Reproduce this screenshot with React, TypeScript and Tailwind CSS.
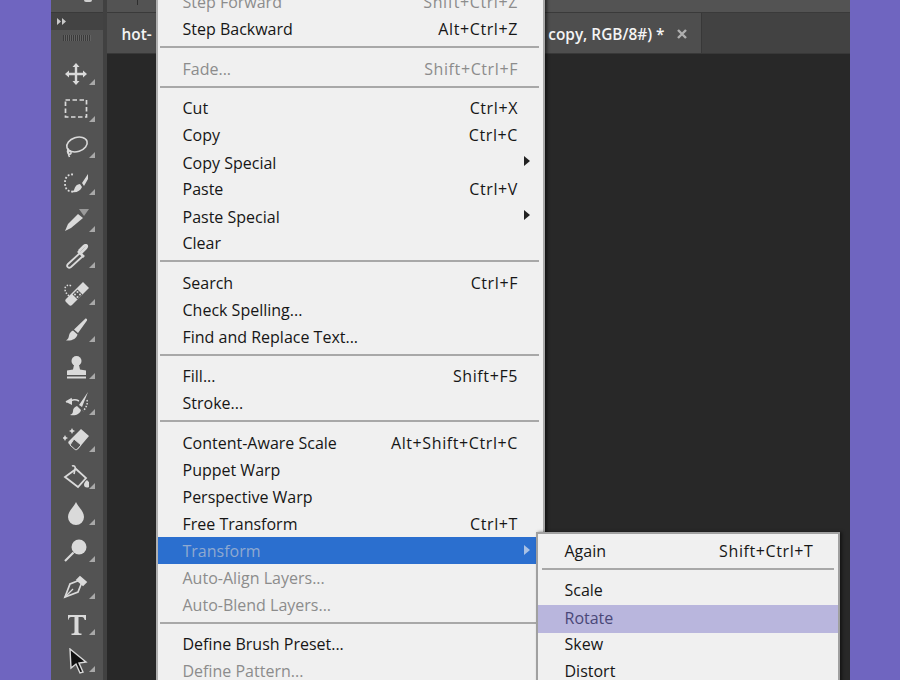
const font = { fontFamily: '"Open Sans", "Noto Sans", sans-serif' }

type Item = { label?: string; keys?: string; off?: boolean; arrow?: boolean; sep?: 'tall' | 'short' }

const mainItems: Item[] = [
  { label: 'Step Forward', keys: 'Shift+Ctrl+Z', off: true },
  { label: 'Step Backward', keys: 'Alt+Ctrl+Z' },
  { sep: 'tall' },
  { label: 'Fade...', keys: 'Shift+Ctrl+F', off: true },
  { sep: 'short' },
  { label: 'Cut', keys: 'Ctrl+X' },
  { label: 'Copy', keys: 'Ctrl+C' },
  { label: 'Copy Special', arrow: true },
  { label: 'Paste', keys: 'Ctrl+V' },
  { label: 'Paste Special', arrow: true },
  { label: 'Clear' },
  { sep: 'tall' },
  { label: 'Search', keys: 'Ctrl+F' },
  { label: 'Check Spelling...' },
  { label: 'Find and Replace Text...' },
  { sep: 'short' },
  { label: 'Fill...', keys: 'Shift+F5' },
  { label: 'Stroke...' },
  { sep: 'tall' },
  { label: 'Content-Aware Scale', keys: 'Alt+Shift+Ctrl+C' },
  { label: 'Puppet Warp' },
  { label: 'Perspective Warp' },
  { label: 'Free Transform', keys: 'Ctrl+T' },
]

const afterTransform: Item[] = [
  { label: 'Auto-Align Layers...', off: true },
  { label: 'Auto-Blend Layers...', off: true },
  { sep: 'short' },
  { label: 'Define Brush Preset...' },
  { label: 'Define Pattern...', off: true },
]

const Arrow = ({ color }: { color: string }) => (
  <svg width="6" height="10" viewBox="0 0 6 10" className="absolute right-[13px] top-[8px]">
    <path d="M0 0L6 5L0 10Z" fill={color} />
  </svg>
)

const MenuRow = ({ item }: { item: Item }) => {
  if (item.sep) {
    return (
      <div className={`${item.sep === 'tall' ? 'h-[13px]' : 'h-[12px]'} pt-[4px] pl-[2px] pr-[4px]`}>
        <div className="h-[2px] bg-[#a8a8a8]" />
      </div>
    )
  }
  return (
    <div className={`relative h-[27px] flex items-center justify-between pl-[25px] pr-[24.5px] ${item.arrow ? 'pt-[2px]' : ''} ${item.off ? 'text-[#8c8c8c]' : 'text-[#161616]'}`}>
      <span>{item.label}</span>
      {item.keys && <span className="tracking-[0.6px]">{item.keys}</span>}
      {item.arrow && <Arrow color="#222222" />}
    </div>
  )
}

const Corner = () => (
  <svg width="6" height="6" viewBox="0 0 6 6" className="absolute left-[38px] top-[22px]">
    <path d="M6 0V6H0Z" fill="#a9a9a9" />
  </svg>
)

// toolbar glyphs, drawn on a 26x26 box
const c = '#dadada'
const tools = [
  // move
  <g key="move" fill={c}>
    <path d="M13 2l3.500 4h-2.300v5.800H20v-2.300l4 3.500-4 3.500v-2.300h-5.800V20h2.300L13 24l-3.500-4h2.300v-5.800H6v2.300L2 13l4-3.500v2.300h5.800V6H9.500z" />
  </g>,
  // marquee
  <rect key="marq" x="2.500" y="3" width="21" height="17" fill="none" stroke={c} strokeWidth="1.700" strokeDasharray="4.500 2.500" />,
  // lasso
  <g key="lasso" fill="none" stroke={c} strokeWidth="1.600">
    <ellipse cx="14" cy="10.500" rx="10.500" ry="7" transform="rotate(-18 14 10.500)" />
    <path d="M6 15c-2 1-2 4 0 5s3-2 1-3-2 3-.5 6" />
  </g>,
  // quick selection
  <g key="quick">
    <path d="M10 3.500C5 3 2 6 2 12s3 9 8 8.500" fill="none" stroke={c} strokeWidth="1.800" strokeDasharray="1.800 1.800" />
    <path d="M25 3l-6 9 2 3 4-7zM17 13c-3 0-5 2-6 6 -1 1-1.500 1.500-2.500 2 5 1 9-1 10.500-5z" fill={c} />
  </g>,
  // 3d crop
  <g key="crop">
    <path d="M16 2h10l-5 7z" fill="#9a9a9a" />
    <path d="M15 7l5 4L8 21l-6 3 3-7z" fill={c} />
  </g>,
  // eyedropper
  <g key="drop" fill="none" stroke={c}>
    <path d="M17 9L5 20c-2 2 0 5 3 3L20 12" strokeWidth="1.800" />
    <path d="M15 7l6 6M18 9l5-5c2-2 0-4-2-2l-5 5" strokeWidth="2.600" />
  </g>,
  // healing
  <g key="heal">
    <path d="M8 5c-3-2-6 0-6 3s2 5 4 7" fill="none" stroke={c} strokeWidth="1.500" strokeDasharray="1.500 1.500" />
    <path d="M20 1l6 6L9 24c-1 1-2 1-3 0l-3-3c-1-1-1-2 0-3z" fill={c} />
    <path d="M14.500 8.500l5 5-5 5-5-5z" fill="#535353" />
    <g fill={c}>
      <circle cx="14.500" cy="11" r="1" /><circle cx="12" cy="13.500" r="1" /><circle cx="17" cy="13.500" r="1" /><circle cx="14.500" cy="16" r="1" />
    </g>
  </g>,
  // brush
  <g key="brush" fill={c}>
    <path d="M22 2c1-1 2.500 0 2 1.500L15 16l-4-3.500z" />
    <path d="M10 13.500l4.500 4c-1 4-5 6.500-11.500 6 2.500-1.500 2.500-3 3-5 .5-2.500 2-4 4-5z" />
  </g>,
  // stamp
  <g key="stamp" fill={c}>
    <circle cx="13.500" cy="7" r="5" />
    <path d="M11 11h5l1 4.500 6 1V21H4v-4.500l6-1z" />
    <rect x="4" y="22.500" width="19" height="2" />
  </g>,
  // history brush
  <g key="hist">
    <path d="M3 11l5-3v2c3-2 6-1 8 0" fill="none" stroke={c} strokeWidth="1.500" />
    <path d="M3 11l6-3v6z" fill={c} />
    <path d="M25 1l-9 13 3 2zM14 15c-3 1-4 3-4 5s-1 3-3 4c6 1 10-1 11-5z" fill={c} />
    <path d="M24 9c1 4-1 8-4 11" fill="none" stroke={c} strokeWidth="1.500" strokeDasharray="1.500 1.500" />
  </g>,
  // eraser
  <g key="eraser">
    <path d="M18 2l8 7-11 13c-1 1-2 1-3 0l-6-5c-1-1-1-2 0-3z" fill={c} />
    <path d="M11 12l7 6-3.500 4c-1 1-2 1-3 0l-4.500-4z" fill="#535353" stroke={c} />
    <g fill={c}>
      <path d="M9 1l1 2 2 1-2 1-1 2-1-2-2-1 2-1zM2 8l1 2 2 1-2 1-1 2-1-2-2-1 2-1z" />
    </g>
  </g>,
  // bucket
  <g key="bucket">
    <path d="M13 5l10 9-8 9L2 13z" fill="none" stroke={c} strokeWidth="1.800" />
    <path d="M9 2c2-1 4 1 3 3l-1 5" fill="none" stroke={c} strokeWidth="1.600" />
    <path d="M24 16c2 2 3 3 3 4.500a3 3 0 01-6 0c0-1.500 1-2.500 3-4.500z" fill={c} />
  </g>,
  // blur
  <path key="blur" d="M13 1c2 5 8 9 8 15a8 8 0 01-16 0C5 10 11 6 13 1z" fill={c} />,
  // dodge
  <g key="dodge">
    <circle cx="16" cy="10" r="7.500" fill={c} />
    <path d="M10.500 15.500L2 24" stroke={c} strokeWidth="2.200" />
  </g>,
  // pen
  <g key="pen" fill="none" stroke={c} strokeWidth="1.700">
    <path d="M17 6L7 10 2 23l13-5 4-10z" />
    <path d="M2 23l8-8" strokeWidth="1.200" />
    <path d="M17 3l6 5-3 3-6-5z" fill={c} />
  </g>,
  // type
  <path key="type" d="M5 4h18v5h-1.300c-.5-2-1.300-3-2.700-3h-3.500v15c0 1 1 1.500 3 1.500V24H8.500v-1.500c2 0 3-.5 3-1.500V6H8c-1.400 0-2.200 1-2.700 3H5z" fill={c} />,
  // path selection
  <path key="select" d="M7 1L8 20l5-4 4 9 3-1-4-9 7-1z" fill="#111111" stroke={c} strokeWidth="1.400" />,
]

const Toolbar = () => (
  <div className="w-[52px] shrink-0 bg-[#535353] flex flex-col">
    <div className="h-[13px] border-b border-[#3a3a3a]">
      <div className="ml-[33px] w-[8px] h-[2px] rounded-b-full bg-[#cfcfcf]" />
    </div>
    <div className="h-[17px] bg-[#434343] flex items-center pl-[6px]">
      <svg width="10" height="7" viewBox="0 0 10 7">
        <path d="M0 0L4 3.500L0 7ZM5 0L9 3.500L5 7Z" fill="#c9c9c9" />
      </svg>
    </div>
    <div className="mt-[5px] ml-[12px] w-[28px] h-[6px] bg-[repeating-linear-gradient(90deg,#3a3a3a_0,#3a3a3a_1px,#626262_1px,#626262_2px)]" />
    <div className="mt-[16px] flex flex-col gap-[3.7px]">
      {tools.map((glyph, i) => (
        <div key={i} className="relative h-[33px] flex items-center justify-center pr-[2px]">
          <svg width="26" height="26" viewBox="0 0 26 26">{glyph}</svg>
          <Corner />
        </div>
      ))}
    </div>
  </div>
)

const Submenu = () => (
  <div className="absolute left-[378px] top-[-5px] w-[304px] h-[200px] bg-[#f0f0f0] border-2 border-[#a0a0a0] border-b-0 shadow-[2px_0_3px_rgba(0,0,0,0.5)] text-[#161616]">
    <div className="h-[32px] pt-[2px] flex items-center justify-between pl-[27px] pr-[24px]">
      <span>Again</span>
      <span className="tracking-[0.6px]">Shift+Ctrl+T</span>
    </div>
    <div className="h-[11px] pl-[4px] pr-[4px] pt-[2px]">
      <div className="h-[2px] bg-[#a8a8a8]" />
    </div>
    <div className="h-[28px] pb-[3px] flex items-center pl-[27px]">Scale</div>
    <div className="h-[28px] pb-[2px] flex items-center pl-[27px] bg-[#b9b6dd] text-[#4a4878]">Rotate</div>
    <div className="h-[24px] pb-[2px] flex items-center pl-[27px]">Skew</div>
    <div className="h-[28px] flex items-center pl-[27px]">Distort</div>
  </div>
)

const App = () => (
  <div className="w-[900px] h-[680px] overflow-hidden bg-[#6f65c0] flex justify-center" style={font}>
    <div className="relative w-[799px] h-[680px] flex bg-[#282828]">
      <Toolbar />
      <div className="w-[4px] shrink-0 bg-[#414141]" />
      <div className="flex-1 flex flex-col">
        <div className="h-[13px] bg-[#535353] border-b border-[#3a3a3a]">
          <div className="ml-[30px] w-[1px] h-[5px] bg-[#2e2e2e]" />
        </div>
        <div className="h-[41px] bg-[#424242] flex border-b border-[#383838]">
          <div className="w-[595px] bg-[#4e4e4e] border-r border-[#383838] flex items-center justify-between pt-[3px] pl-[15px] pr-[14px] text-[15.4px] font-semibold text-[#f4f4f4]">
            <span>hot-</span>
            <span className="flex items-center gap-[12px]">
              copy, RGB/8#) *
              <svg width="10" height="10" viewBox="0 0 10 10">
                <path d="M1 1L9 9M9 1L1 9" stroke="#b0b0b0" strokeWidth="2.400" />
              </svg>
            </span>
          </div>
        </div>
        <div className="flex-1 bg-[#282828]" />
      </div>

      {/* Edit menu */}
      <div className="absolute left-[105px] top-[-12px] w-[389px] h-[700px] bg-[#f0f0f0] border-x-2 border-l-[#b0b0b0] border-r-[#a8a8a8] shadow-[2px_0_3px_rgba(0,0,0,0.55)] text-[16px]">
        {mainItems.map((item, i) => (
          <MenuRow key={i} item={item} />
        ))}
        <div className="relative h-[27px] flex items-center pl-[25px] bg-[#2b6fcf] text-[#8fa9d0]">
          <span>Transform</span>
          <Arrow color="#a9c1e4" />
          <Submenu />
        </div>
        {afterTransform.map((item, i) => (
          <MenuRow key={i} item={item} />
        ))}
      </div>
    </div>
  </div>
)

export default App
